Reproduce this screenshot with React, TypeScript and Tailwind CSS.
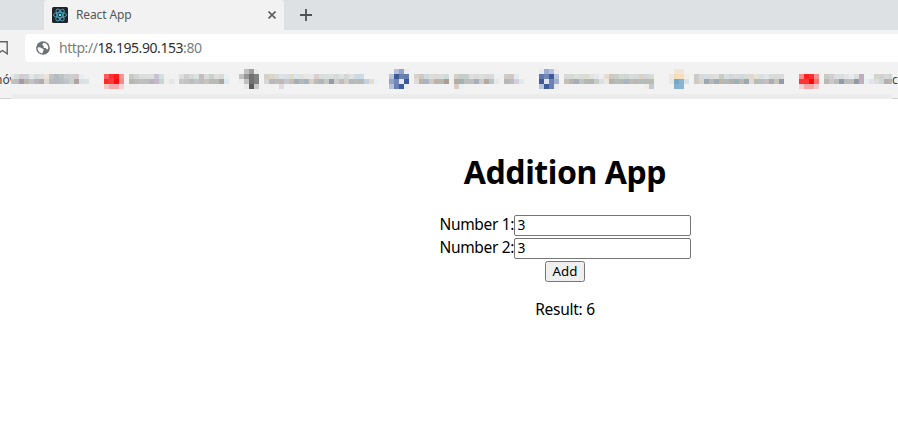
import { useState } from "react";

// Each bookmark is a mosaic of 5px cells; rows are listed top to bottom, "-" is an empty cell.
type Mosaic = { x: number; rows: string[] };

const firstMosaic: string[] = [
  "",
  "e6e6e4 d9dcd9 d3cbd3 cbd1d6 e2e6e4 d6dcdc dfdfdf ebe4de c4c4c8 b5bcbf bcc4c1 c9cdcd cdd0d3 d3c9c9 e9eff1 f0f1f1",
  "bfc3c3 bcbcc2 a59ba8 b9b6ac c0c4c4 b8b5c0 b5aaae dfdad0 bcbcc0 b5bcc0 b8bebb bec6cb ccd0cc b0a4a4 dce0e2 dbe5e8",
  "",
];

const mosaics: Mosaic[] = [
  {
    x: 104,
    rows: [
      "",
      "fc5c5c fc3030 ff1c1c f79494 - c7cac2 d3d3d3 dcdddd dddddd dce0df c9c3d3 d3dfe0 f0f0f0 f1f1ef f0f0f0 dedede d0cece d6d9d9 dde1e2 c3bdb9 d9dcdf cdcfc9 dedede d9d9d9 eaf1f3",
      "fc2c2c ff3c3c ff0c0c f38c8c - b5b8af bcbcbc c0c0c0 bcbdbf b8b6bc c6b8ca c9d3d4 eff0ee e6e6e6 f0f0f0 c9c7c3 c3c3c3 bcbdbd c3c5cd c3bcbd c7c4be bcb7b9 b5bcb8 aaa7a0 dce8f2",
      "f3c8c8 f5aaaa f5aaaa f2d3d3",
    ],
  },
  {
    x: 239,
    rows: [
      "- c0c0c0 9c9c9c ececec",
      "c0c0c0 969696 707070 828282 - d5cfca dad6bf d9d9d9 dee1e5 dce0e4 e0dccd dce5e8 e2e2e2 e9e7e4 e3e7ee dccfc9 d9dfdd d8dfdf dbe0dc d6dbd9 e0e0e0 d3d9d4 e2e2e2 cedae1 c8dce8 f2f2f2",
      "ededed c0c0c0 707070 808080 - d6d6d6 b9b9bd bcbcbc c2b8b0 c3c8d2 c9bcac a3afb2 b8b8b8 a9b3bd d9cfc5 bcbcb7 b2b3bd c6cac3 9a9aa2 cfd0cb c0bbbc d3cfc6 b5b8bd b8bdb9 b7bab9 c0d2df e3ddcf e9eff3",
      "- e8e8e8 5c5c5c c8c8c8 - - - - e1d9e1",
    ],
  },
  {
    x: 389,
    rows: [
      "- b6c0da 92a1c7 ececef",
      "b9c3d9 3d5a99 6a80b3 647bae - d9d2ca d2c9c6 cfdcdc dfddd9 dadada d9dfdd d0dbdc f0f0f0 d5cec9 c1cdcf c4cecb dfdfdf dbdbd9 dbe0dc dadada dadada ebf0f2 f0f0f0 d2cac4 cbc8c6 e3eaf0",
      "94a3c8 7187b7 e6e9f0 3a5898 - e0dcd5 b9b3a8 aab3c8 cfc9c3 bcb3a9 b7b9b0 ab9d93 eef0f0 b5aba4 a2b3b7 bcbec0 bfc0bd a9aebc cbccce b4a8a1 b6c7cc e8e8e8 f0f0f0 b7b7b7 bbbcc0 d6cedb dfe9ee",
      "b7c2da 6880b3 3d5b9a ececef - - - - - - - - - d7cdc6 e7f0f2",
    ],
  },
  {
    x: 539,
    rows: [
      "e9ebef 9dacd0 b6c2db ececef",
      "5f77ad 7187b7 3d5998 bcc6da - d9d9d9 d6dad4 dce0da d9dcd9 dbddd0 e5e1dc e3e8ee eeeeee e8ddd5 d0c9bd cacfc8 d2d9cd ced7d2 d8dddc d7dad9 dad2c8 d0d6d9 d8ded3",
      "3c5b9c dfe5ef 6d83b5 9fafd0 - c5beb8 b8b4b6 a9adb6 bbc5c8 b6b9b1 b2b6b2 c7cac5 d9dee4 ece9df b8b1ac b8bbb8 b7b9b5 aab6be bcbcb4 bcb6b8 b4beb9 b6bab9 bcbcb3",
      "b9c3d9 3e5b9b 6a80b1 ececef - - - - - - - - - - - - - - - - - f1eee5 c2c8d5",
    ],
  },
  {
    x: 669,
    rows: [
      "- f3e5d3 f2e5d5",
      "ede9e2 f5dfb9 f5dec0 f1eee9 - cacaca d9d9d9 d7dce0 dcdcdc e0e0df c6cec5 d7dfe1 d0d7dd d9dbda d0d9df d8dcd7 e1d7d4 e5e2d6 d9dfe2 e0e5e8 dadada d9dad8 dadada",
      "e6e8e9 74a7ca 86b3d1 d7e2e9 - cfcac4 ddd5c9 9ba9af b9b9b3 9fabb7 c0b5a9 b1b9bd b7b0a8 9fafb8 c0b6a9 9ca7b4 e5d8d5 b9bbb5 b0bfc8 c7bfb7 aaacb9 c9c5ba 929ca9",
      "- 86b2d0 87b4d4",
    ],
  },
  {
    x: 799,
    rows: [
      "",
      "f78c8c ff2020 fc3030 f59090 - c8ccc4 d3ccd1 dedede d9dee0 e4e4e4 e6ecef d9dfdb c3a9bd eef3f4 f0f1f1 d4d4cc d4d1d4 d8d8d8 cbd6db",
      "ff3434 ff3434 ff0808 fa7070 - bdb7b5 c7cac9 bcbcbc 929ca9 bbbdbd c1beb7 929ca9 c4aebd e7f1f3 e2e1ed dddddd d2d5d8 b4b0ad b2b5bb",
      "f2d2d2 f5a8a8 f5a8a8 f0c8d0",
    ],
  },
];

function BookmarkMosaic({ rows }: { rows: string[] }) {
  const grid = rows.map((r) => (r ? r.split(" ") : []));
  const columns = Math.max(...grid.map((r) => r.length));
  return (
    <svg width={columns * 5} height={20} shapeRendering="crispEdges" className="block shrink-0">
      {grid.flatMap((row, y) =>
        row.map((c, x) =>
          c === "-" ? null : <rect key={`${x}-${y}`} x={x * 5} y={y * 5} width={5} height={5} fill={`#${c}`} />,
        ),
      )}
    </svg>
  );
}

function ReactIcon() {
  return (
    <svg width="16" height="16" viewBox="0 0 16 16" className="block shrink-0">
      <rect width="16" height="16" rx="1.5" fill="#20232a" />
      <g fill="none" stroke="#4ba9c0" strokeWidth="0.9">
        <ellipse cx="8" cy="8" rx="6.6" ry="2.6" />
        <ellipse cx="8" cy="8" rx="6.6" ry="2.6" transform="rotate(60 8 8)" />
        <ellipse cx="8" cy="8" rx="6.6" ry="2.6" transform="rotate(120 8 8)" />
      </g>
      <circle cx="8" cy="8" r="1.3" fill="#61dafb" />
    </svg>
  );
}

function GlobeIcon() {
  return (
    <svg width="16" height="16" viewBox="0 0 24 24" className="block shrink-0">
      <circle cx="12" cy="12" r="10.3" fill="#6f7275" />
      <path d="M4 11.500C6 10.500 8.500 11 10 12.500C11 13.500 13 13 13 15C13 16.500 11 17 11.500 19.800C7 20 3.500 16 4 11.500Z" fill="#fff" />
      <path d="M13 4C17 4.300 20 8 20 12L18.500 14.500C17 13 16.500 12 14.500 12C12.500 11.500 12 10 13.500 9C12 8.500 11 8 11 6.500Z" fill="#fff" />
    </svg>
  );
}

function NumberField({ label, value, onChange }: { label: string; value: string; onChange: (v: string) => void }) {
  return (
    <label className="flex h-[23px] items-center">
      <span className="mb-[2px] w-[74px] whitespace-nowrap text-[15.5px] leading-[21px] tracking-[-0.33px]">{label}</span>
      <input
        className="mb-px h-[21px] w-[177px] rounded-[2px] border border-[#767676] bg-white px-[3px] pb-px text-[13.8px] leading-4 outline-none"
        value={value}
        onChange={(e) => onChange(e.target.value)}
      />
    </label>
  );
}

export default function App() {
  const [a, setA] = useState("3");
  const [b, setB] = useState("3");
  const [sum, setSum] = useState(6);

  return (
    <div className="h-[432px] w-[898px] overflow-hidden bg-white font-['Noto_Sans','Open_Sans',sans-serif] text-black">
      <div className="flex h-[30px] bg-[#dee1e4] pl-11">
        <div className="flex w-[240px] items-center rounded-t-[3px] bg-[#f2f2f2] pl-2 pr-2 text-[#54575a]">
          <ReactIcon />
          <span className="ml-2 flex-1 text-[12px] leading-4 tracking-[-0.12px]">React App</span>
          <svg width="8" height="8" viewBox="0 0 8 8" stroke="#5c5f62" strokeWidth="1.6" className="block">
            <path d="M.5 .5L7.500 7.500M7.500 .5L.5 7.500" />
          </svg>
        </div>
        <svg width="12" height="12" viewBox="0 0 12 12" stroke="#505356" strokeWidth="1.8" className="ml-4 mt-[9px] block">
          <path d="M6 0V12M0 6H12" />
        </svg>
      </div>
      <div className="flex h-8 items-end bg-[#f2f2f2]">
        <svg width="8" height="14" viewBox="0 0 8 14" fill="none" stroke="#606366" strokeWidth="1.4" className="mb-[7px] block">
          <path d="M-3 .8H7.2V12.800L2.500 9.500L-3 13" />
        </svg>
        <div className="ml-[17px] flex h-7 flex-1 items-center rounded-l-[4px] bg-white pl-[10px]">
          <GlobeIcon />
          <span className="ml-2 text-[14px] leading-5 tracking-[-0.44px] text-[#7b7e81]">
            http://<span className="text-[#303134]">18.195.90.153</span>:80
          </span>
        </div>
      </div>
      <div className="relative h-8 overflow-hidden bg-[#f2f2f2] text-[12px] leading-4">
        <span className="absolute left-[-5px] top-[10px] text-[#3c4043]">nóv</span>
        <div className="absolute left-[11px] top-[7px] overflow-hidden">
          <div className="-ml-[2px]">
            <BookmarkMosaic rows={firstMosaic} />
          </div>
        </div>
        {mosaics.map((m) => (
          <div key={m.x} className="absolute top-[7px]" style={{ left: m.x }}>
            <BookmarkMosaic rows={m.rows} />
          </div>
        ))}
        <span className="absolute left-[892px] top-[7px] h-5 w-[6px] bg-[#f2f2f2] pt-[3px] text-[#3c4043]">c</span>
      </div>
      <div className="flex h-[5px] items-end bg-[#f2f2f2]">
        <div className="h-px w-[11px] bg-[#d0d0d0]" />
        <div className="h-[5px] flex-1 bg-[#ececec]" />
        <div className="h-px w-[6px] bg-[#d0d0d0]" />
      </div>
      <main className="flex flex-col items-center pl-[232px] pt-[51px]">
        <h1 className="h-[43px] whitespace-nowrap text-[32px] font-bold leading-[43px] tracking-[-0.42px]">Addition App</h1>
        <div className="mt-[21px]">
          <NumberField label="Number 1:" value={a} onChange={setA} />
          <NumberField label="Number 2:" value={b} onChange={setB} />
        </div>
        <button
          className="mt-px h-[21px] w-10 rounded-[2.5px] border border-[#767676] bg-[#efefef] pb-px text-[13.3px] leading-[17px]"
          onClick={() => setSum(Number(a) + Number(b))}
        >
          Add
        </button>
        <p className="mt-[17px] text-[15.5px] leading-[21px] tracking-[-0.28px]">Result: {sum}</p>
      </main>
    </div>
  );
}
